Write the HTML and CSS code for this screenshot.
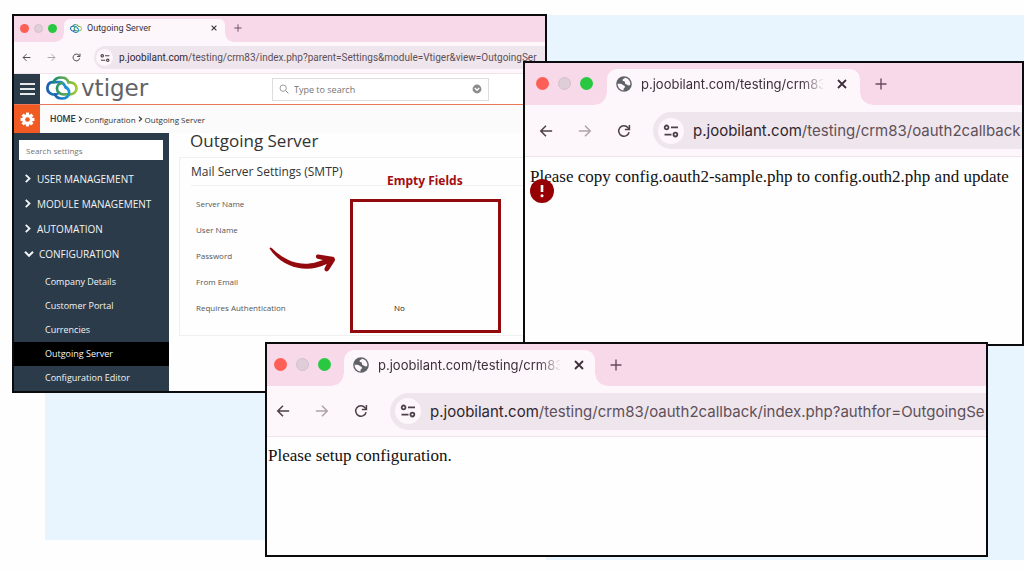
FILE: index.html
```html
<!DOCTYPE html>
<html lang="en">
<head>
<meta charset="utf-8">
<title>Outgoing Server</title>
<link rel="stylesheet" href="styles.css">
</head>
<body>
<svg class="defs" aria-hidden="true">
  <symbol id="back" viewBox="0 0 16 16"><path d="M15 8H2M8 2 2 8l6 6" fill="none" stroke="currentColor" stroke-width="1.7"/></symbol>
  <symbol id="forward" viewBox="0 0 16 16"><path d="M1 8h13M8 2l6 6-6 6" fill="none" stroke="currentColor" stroke-width="1.7"/></symbol>
  <symbol id="reload" viewBox="0 0 16 16"><path d="M13.8 9.2A6 6 0 1 1 12.6 4.2L14 5.8" fill="none" stroke="currentColor" stroke-width="1.7"/><path d="M14.2 1v5.2H9" fill="none" stroke="currentColor" stroke-width="1.7"/></symbol>
  <symbol id="tune" viewBox="0 0 16 16"><g fill="none" stroke="currentColor" stroke-width="1.8"><circle cx="3.6" cy="4.4" r="1.9"/><path d="M8 4.4h7M1.5 11.6h7"/><circle cx="12.4" cy="11.6" r="1.9"/></g></symbol>
  <symbol id="close" viewBox="0 0 10 10"><path d="m1 1 8 8M9 1 1 9" stroke="currentColor" stroke-width="1.8"/></symbol>
  <symbol id="plus" viewBox="0 0 12 12"><path d="M6 .5v11M.5 6h11" stroke="currentColor" stroke-width="1.4"/></symbol>
  <symbol id="globe" viewBox="0 0 16 16"><circle cx="8" cy="8" r="7.8" fill="#5f6368"/><path d="M1.6 7.8C3.5 7.5 5.8 7.8 6.6 8.8c.7 1 2.3.6 2.4 2 .1 1.200-1.500 1.200-1.500 2.600v1c-3.500-.2-5.900-3-5.900-6.600ZM8.800 1.700c-.1 1.300-2.200.8-2.300 2.300-.1 1.300 1.800.8 2.300 1.700.6 1.200-.2 2.300 1.300 2.500 1.300.2 1.500 1.300 2.700 1.200.9 0 1.500-.4 1.600-1.400 0-3.300-2.400-6-5.600-6.300Z" fill="#fdf6fa"/></symbol>
  <symbol id="rings" viewBox="0 0 32 24">
    <defs><linearGradient id="ring-a"><stop offset="0" stop-color="#1b5fae"/><stop offset="1" stop-color="#2299d6"/></linearGradient><linearGradient id="ring-b"><stop offset="0" stop-color="#168a72"/><stop offset="1" stop-color="#a5c933"/></linearGradient></defs>
    <g fill="none" stroke-width="2.700" stroke-linecap="round">
      <path d="M13 16.500c-2 2.500-5 2.500-7.500 1.500C2 16.500 1.200 13.500 1.500 11 2 8 4.500 6.200 7.200 6.200h7c3.500 0 4.300 3.600 6.300 5.600" stroke="url(#ring-a)"/>
      <path d="M7.300 6.200C9 2.500 12 1.400 15.500 1.500c3.500 0 6 1.900 7 5 4.500-.6 7.800 1.800 8 5.700.2 4-3 6.300-6.800 6.100h-6c-3.500 0-6.500-2-6.700-5.600-.1-2.700 1.800-5 4.500-5.500" stroke="url(#ring-b)"/>
      <path d="M9 18.500c1 2.500 4 4 7 4 3.600 0 6.500-2 7-5.300.3-2.700-1.200-5-3.500-5.800" stroke="url(#ring-a)"/>
    </g>
  </symbol>
  <symbol id="chevron-right" viewBox="0 0 8 10"><path d="m1.500 1 4.200 4-4.200 4" fill="none" stroke="currentColor" stroke-width="2"/></symbol>
  <symbol id="chevron-down" viewBox="0 0 10 8"><path d="m1 1.800 4 4 4-4" fill="none" stroke="currentColor" stroke-width="2"/></symbol>
</svg>

<main class="board">
  <div class="panel panel-right"></div>
  <div class="panel panel-left"></div>

  <section class="window crm">
    <div class="tabs">
      <div class="lights"><i class="red"></i><i class="gray"></i><i class="green"></i></div>
      <div class="tab"><svg class="fav"><use href="#rings"/></svg><span class="tab-title">Outgoing Server</span><button class="tab-close" aria-label="Close tab"><svg><use href="#close"/></svg></button></div>
      <button class="new-tab" aria-label="New tab"><svg><use href="#plus"/></svg></button>
    </div>
    <div class="toolbar">
      <button aria-label="Back"><svg><use href="#back"/></svg></button>
      <button class="off" aria-label="Forward"><svg><use href="#forward"/></svg></button>
      <button aria-label="Reload"><svg><use href="#reload"/></svg></button>
      <div class="address"><span class="site"><svg><use href="#tune"/></svg></span><span class="url"><b>p.joobilant.com</b>/testing/crm83/index.php?parent=Settings&amp;module=Vtiger&amp;view=OutgoingSer</span></div>
    </div>
    <header class="app-bar">
      <button class="menu" aria-label="Menu"><i></i><i></i><i></i></button>
      <div class="brand"><svg><use href="#rings"/></svg><span>vtiger</span></div>
      <div class="search">
        <svg viewBox="0 0 12 12"><circle cx="5" cy="5" r="3.800" fill="none" stroke="#888"/><path d="m8 8 3.300 3.300" stroke="#888" stroke-width="1.200"/></svg>
        <input type="text" placeholder="Type to search" aria-label="Type to search">
        <svg viewBox="0 0 12 12"><circle cx="6" cy="6" r="5.300" fill="#8b8b8b"/><path d="m3.300 4.800 2.700 2.700 2.700-2.700" fill="none" stroke="#fff" stroke-width="1.600"/></svg>
      </div>
    </header>
    <nav class="crumbs">
      <span class="gear"><svg viewBox="0 0 16 16"><g fill="#fff"><circle cx="8" cy="8" r="5.600"/><path id="tooth" d="M6.300.6h3.400v14.800H6.300z"/><use href="#tooth" transform="rotate(45 8 8)"/><use href="#tooth" transform="rotate(90 8 8)"/><use href="#tooth" transform="rotate(135 8 8)"/></g><circle cx="8" cy="8" r="2.500" fill="#f15a22"/></svg></span>
      <a class="home" href="#">HOME</a><svg class="sep"><use href="#chevron-right"/></svg><a href="#">Configuration</a><svg class="sep"><use href="#chevron-right"/></svg><span>Outgoing Server</span>
    </nav>
    <div class="app">
      <aside class="side">
        <input type="text" placeholder="Search settings" aria-label="Search settings">
        <ul class="groups">
          <li><svg><use href="#chevron-right"/></svg>USER MANAGEMENT</li>
          <li><svg><use href="#chevron-right"/></svg>MODULE MANAGEMENT</li>
          <li><svg><use href="#chevron-right"/></svg>AUTOMATION</li>
          <li class="open"><svg><use href="#chevron-down"/></svg>CONFIGURATION</li>
        </ul>
        <ul class="links">
          <li><a href="#">Company Details</a></li>
          <li><a href="#">Customer Portal</a></li>
          <li><a href="#">Currencies</a></li>
          <li class="active"><a href="#">Outgoing Server</a></li>
          <li><a href="#">Configuration Editor</a></li>
        </ul>
      </aside>
      <div class="content">
        <h1>Outgoing Server</h1>
        <div class="card">
          <h2>Mail Server Settings (SMTP)</h2>
          <table>
            <tr><th>Server Name</th><td></td></tr>
            <tr><th>User Name</th><td></td></tr>
            <tr><th>Password</th><td></td></tr>
            <tr><th>From Email</th><td></td></tr>
            <tr><th>Requires Authentication</th><td>No</td></tr>
          </table>
        </div>
      </div>
    </div>
    <span class="note">Empty Fields</span>
    <div class="note-box"></div>
    <svg class="note-arrow" viewBox="0 0 68 26"><path d="M.5 1.500C1 .3 2 .3 3 1.200 15 13 30 20 47 15.300l7-2.300-5.500-1.300c-2.500-1-2-4.500 1-4.200l14 2.300c2.500.4 3 2.500 2 4.500l-5.600 8.800c-2 2.800-5.400.8-4.200-2l2-4.100C39 26.500 14 22 .5 1.500Z" fill="#930a0e"/></svg>
  </section>

  <section class="window large callback">
    <div class="tabs">
      <div class="lights"><i class="red"></i><i class="gray"></i><i class="green"></i></div>
      <div class="tab"><svg class="fav"><use href="#globe"/></svg><span class="tab-title">p.joobilant.com/testing/crm83</span><button class="tab-close" aria-label="Close tab"><svg><use href="#close"/></svg></button></div>
      <button class="new-tab" aria-label="New tab"><svg><use href="#plus"/></svg></button>
    </div>
    <div class="toolbar">
      <button aria-label="Back"><svg><use href="#back"/></svg></button>
      <button class="off" aria-label="Forward"><svg><use href="#forward"/></svg></button>
      <button aria-label="Reload"><svg><use href="#reload"/></svg></button>
      <div class="address"><span class="site"><svg><use href="#tune"/></svg></span><span class="url"><b>p.joobilant.com</b>/testing/crm83/oauth2callback</span></div>
    </div>
    <p class="message">Please copy config.oauth2-sample.php to config.outh2.php and update</p>
    <svg class="alert" viewBox="0 0 24 24" role="img" aria-label="Error"><circle cx="12" cy="12" r="12" fill="#960004"/><path d="M12 6v7" stroke="#fff" stroke-width="2.600"/><circle cx="12" cy="16.700" r="1.500" fill="#fff"/></svg>
  </section>

  <section class="window large setup">
    <div class="tabs">
      <div class="lights"><i class="red"></i><i class="gray"></i><i class="green"></i></div>
      <div class="tab"><svg class="fav"><use href="#globe"/></svg><span class="tab-title">p.joobilant.com/testing/crm83</span><button class="tab-close" aria-label="Close tab"><svg><use href="#close"/></svg></button></div>
      <button class="new-tab" aria-label="New tab"><svg><use href="#plus"/></svg></button>
    </div>
    <div class="toolbar">
      <button aria-label="Back"><svg><use href="#back"/></svg></button>
      <button class="off" aria-label="Forward"><svg><use href="#forward"/></svg></button>
      <button aria-label="Reload"><svg><use href="#reload"/></svg></button>
      <div class="address"><span class="site"><svg><use href="#tune"/></svg></span><span class="url"><b>p.joobilant.com</b>/testing/crm83/oauth2callback/index.php?authfor=OutgoingSe</span></div>
    </div>
    <p class="message">Please setup configuration.</p>
  </section>
</main>
</body>
</html>
```
FILE: styles.css
```css
* { box-sizing: border-box; }
body { margin: 0; background: #fefefe; font-family: "Open Sans", sans-serif; }
button { padding: 0; border: 0; background: none; color: inherit; font: inherit; display: flex; }
a { color: inherit; text-decoration: none; }
ul { margin: 0; padding: 0; list-style: none; }
svg { display: block; flex: none; }
.defs { position: absolute; width: 0; height: 0; }

/* Free canvas with overlapping windows */
.board { position: relative; min-height: 571px; overflow: hidden; }
.panel { position: absolute; background: #e8f4fe; }
.panel-right { left: 562px; right: 0; top: 15px; height: 545px; }
.panel-right { left: 546px; }
.panel-left { left: 45px; right: 478px; top: 380px; height: 160px; }
.window { position: absolute; display: flex; flex-direction: column; border: 2px solid #0b0b0d; background: #fefefe; overflow: hidden; }
.crm { left: 12px; right: 477px; top: 14px; height: 379px; }
.callback { left: 523px; right: 0; top: 61px; height: 285px; }
.setup { left: 265px; right: 36px; top: 342px; height: 215px; }

/* Browser chrome */
.tabs { display: flex; flex: none; align-items: flex-end; height: 26px; padding-left: 6px; background: #f8d9e9; font-family: Inter, sans-serif; color: #3b3038; }
.lights { display: flex; align-self: flex-start; align-items: center; gap: 5px; height: 24px; }
.lights i { width: 9px; height: 9px; border-radius: 50%; }
.red { background: #fd5f57; }
.gray { background: #dfcdd8; border: 1px solid #d3c1cc; }
.green { background: #2ac840; }
.tab { position: relative; display: flex; align-items: center; width: 161px; height: 23px; margin-left: 7px; padding: 0 8px 5px 6px; border-radius: 6px 6px 0 0; background: #fdf6fa; }
.tab::before, .tab::after { content: ""; position: absolute; bottom: 0; width: 8px; height: 8px; }
.tab::before { right: 100%; background: radial-gradient(circle at 0 0, transparent 7px, #fdf6fa 8px); }
.tab::after { left: 100%; background: radial-gradient(circle at 100% 0, transparent 7px, #fdf6fa 8px); }
.fav { width: 12px; height: 11px; margin-right: 5px; }
.tab-title { flex: 1; overflow: hidden; white-space: nowrap; font-family: Roboto, sans-serif; font-size: 9px; line-height: 16px; }
.tab-close svg { width: 6px; height: 6px; }
.new-tab { align-self: flex-start; align-items: center; height: 24px; margin-left: 9px; color: #6b4a60; }
.new-tab svg { width: 8px; height: 8px; }
.toolbar { display: flex; flex: none; align-items: center; gap: 16px; height: 32px; padding-left: 8px; border-bottom: 1px solid #f0e4ea; background: #fdf6fa; color: #4e4048; }
.toolbar button svg { width: 9px; height: 9px; }
.toolbar .off { color: #ada2a9; }
.address { display: flex; flex: 1; align-items: center; min-width: 0; height: 23px; margin-left: -3px; padding-left: 2px; border-radius: 12px 0 0 12px; background: #efe5ec; }
.site { display: grid; flex: none; place-items: center; width: 17px; height: 17px; border-radius: 50%; background: #fdf6fa; }
.site svg { width: 10px; height: 10px; }
.url { overflow: hidden; margin-left: 6px; font-family: Roboto, sans-serif; font-size: 10px; white-space: nowrap; color: #5d5059; }
.url b { font-weight: 400; color: #30262d; }

.large .tabs { height: 42px; padding-left: 11px; }
.large .lights { gap: 9px; height: 41px; }
.large .lights i { width: 13px; height: 13px; }
.large .tab { width: 253px; height: 36px; margin-left: 14px; padding: 0 13px 6px 9px; border-radius: 10px 10px 0 0; }
.large .tab::before, .large .tab::after { width: 12px; height: 12px; }
.large .tab::before { background: radial-gradient(circle at 0 0, transparent 11px, #fdf6fa 12px); }
.large .tab::after { background: radial-gradient(circle at 100% 0, transparent 11px, #fdf6fa 12px); }
.large .fav { width: 16px; height: 16px; margin-right: 9px; }
.large .tab-title { flex: none; width: 182px; margin-right: 14px; font-family: Inter, sans-serif; font-size: 13px; line-height: 20px; mask-image: linear-gradient(90deg, #000 160px, transparent 184px); }
.large .tab-close svg { width: 10px; height: 10px; }
.large .new-tab { height: 41px; margin-left: 15px; }
.large .new-tab svg { width: 12px; height: 12px; }
.large .toolbar { gap: 25px; height: 52px; padding-left: 14px; }
.large .toolbar button svg { width: 14px; height: 14px; }
.large .address { height: 37px; margin-left: -3px; padding-left: 5px; border-radius: 19px 0 0 19px; }
.large .site { width: 26px; height: 26px; }
.large .site svg { width: 16px; height: 16px; }
.large .url { margin-left: 9px; font-family: Inter, sans-serif; font-size: 15px; }
.setup .tabs { padding-left: 7px; }
.setup .tab { width: 251px; margin-left: 13px; padding-right: 12px; }
.setup .toolbar { height: 51px; padding-left: 9px; }
.message { margin: 0; padding: 9px 0 0 5px; font: 17px/22px "Liberation Serif", serif; white-space: nowrap; color: #111; }
.setup .message { padding: 8px 0 0 1px; }
.alert { position: absolute; left: 5px; top: 116px; width: 24px; height: 24px; }

/* CRM page */
.app-bar { display: flex; flex: none; align-items: center; height: 31px; border-bottom: 1px solid #e8795a; background: #fff; }
.menu { flex-direction: column; align-items: center; justify-content: center; gap: 3px; align-self: stretch; width: 26px; background: #2c3b49; }
.menu i { width: 15px; height: 2px; background: #e4e8eb; }
.brand { display: flex; align-items: center; width: 232px; padding: 0 0 3px 6px; }
.brand svg { width: 32px; height: 24px; }
.brand span { margin-left: 3px; font: 23px/26px "DejaVu Sans", sans-serif; color: #626366; }
.search { display: flex; align-items: center; gap: 5px; width: 217px; height: 23px; padding: 0 6px; border: 1px solid #ddd; }
.search svg { width: 10px; height: 10px; }
.search input { flex: 1; min-width: 0; padding: 0; border: 0; background: none; font: 9px "Open Sans", sans-serif; }
input::placeholder { color: #757575; opacity: 1; }
.crumbs { display: flex; flex: none; align-items: center; height: 28px; background: #fbfbfb; font-size: 8px; color: #333; }
.gear { display: grid; place-items: center; align-self: stretch; width: 26px; margin-right: 10px; background: #f15a22; }
.gear svg { width: 15px; height: 15px; }
.home { font: 500 9px Roboto, sans-serif; color: #2c3b49; }
.sep { width: 5px; height: 6px; margin: 0 2px; }
.app { display: flex; flex: 1; min-height: 0; }
.side { flex: none; width: 155px; background: #2c3b49; color: #f2f4f5; }
.side input { display: block; width: 144px; height: 20px; margin: 7px 0 6px 5px; padding: 0 7px; border: 0; background: #fff; font: 8px "Open Sans", sans-serif; }
.groups li { display: flex; align-items: center; gap: 5px; height: 25px; padding-left: 10px; font-size: 10px; }
.groups svg { width: 8px; height: 9px; }
.groups .open svg { width: 10px; height: 8px; }
.links { padding-top: 4px; }
.links li { height: 24px; padding-left: 31px; font-size: 9px; line-height: 24px; }
.links .active { background: #000; }
.content { flex: 1; padding: 0 0 0 10px; }
h1 { margin: 0; padding: 0 11px; font-size: 17px; line-height: 16px; font-weight: 400; color: #333; }
.card { margin-top: 8px; padding: 0 0 15px 11px; border: 1px solid #f0f0f0; }
h2 { margin: 0; border-bottom: 1px solid #f0f0f0; font-size: 12px; line-height: 27px; font-weight: 400; color: #333; }
table { width: 100%; margin-top: 4px; border-collapse: collapse; }
th, td { height: 26px; padding: 0 0 0 5px; text-align: left; font-size: 8px; font-weight: 400; color: #555; }
th { width: 198px; }
td { color: #222; }
.note { position: absolute; left: 373px; top: 156px; font: 700 12px/18px "Noto Sans", sans-serif; color: #a30d12; }
.note-box { position: absolute; left: 336px; top: 183px; width: 151px; height: 134px; border: 3px solid #930a0e; }
.note-arrow { position: absolute; left: 255px; top: 231px; width: 68px; height: 26px; }
```
